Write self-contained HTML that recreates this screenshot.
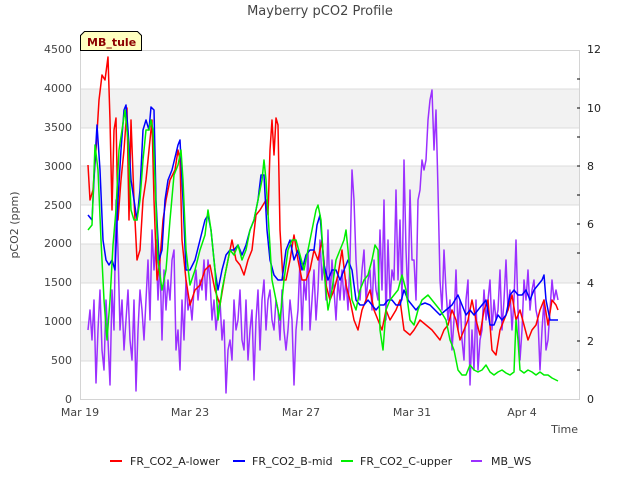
<!DOCTYPE html>
<html><head><meta charset="utf-8"><style>
html,body{margin:0;padding:0;background:#fff;width:640px;height:480px;overflow:hidden}
svg{display:block;font-family:"DejaVu Sans","Liberation Sans",sans-serif}
</style></head><body>
<svg width="640" height="480" viewBox="0 0 640 480">
<rect x="80" y="89" width="500" height="39" fill="#f2f2f2"/>
<rect x="80" y="166" width="500" height="39" fill="#f2f2f2"/>
<rect x="80" y="244" width="500" height="39" fill="#f2f2f2"/>
<rect x="80" y="322" width="500" height="39" fill="#f2f2f2"/>
<g stroke="#dcdcdc" stroke-width="1">
<line x1="80" y1="89" x2="580" y2="89"/><line x1="80" y1="128" x2="580" y2="128"/>
<line x1="80" y1="166" x2="580" y2="166"/><line x1="80" y1="205" x2="580" y2="205"/>
<line x1="80" y1="244" x2="580" y2="244"/><line x1="80" y1="283" x2="580" y2="283"/>
<line x1="80" y1="322" x2="580" y2="322"/><line x1="80" y1="361" x2="580" y2="361"/>
</g>
<rect x="80.5" y="50.5" width="499" height="349" fill="none" stroke="#d4d4d4"/>
<g fill="none" stroke-width="1.5" stroke-linejoin="round">
<polyline stroke="#9b30ff" points="88,330 90,310 92,340 94,300 96,383 98,330 100,290 102,350 104,370 106,300 108,340 110,385 112,290 114,330 116,200 118,250 120,330 122,300 124,350 126,320 128,290 130,340 132,360 134,300 136,391 138,330 140,290 142,310 144,340 146,300 148,260 150,320 152,230 154,270 156,240 158,300 160,260 162,340 164,270 166,310 168,280 170,300 172,260 174,250 176,350 178,330 180,370 182,300 184,340 186,280 188,310 190,300 192,320 194,290 196,270 198,300 200,280 202,290 204,260 206,300 208,260 210,280 212,320 214,300 216,330 218,310 220,300 222,340 224,320 226,393 228,350 230,340 232,360 234,300 236,330 238,320 240,290 242,340 244,350 246,300 248,360 250,330 252,310 254,380 256,320 258,290 260,350 262,300 264,280 266,330 268,300 270,290 272,320 274,330 276,300 278,310 280,340 282,290 284,330 286,350 288,330 290,300 292,320 294,385 296,330 298,310 300,260 302,330 304,280 306,300 308,250 310,330 312,300 314,270 316,320 318,290 320,240 322,280 324,260 326,300 328,230 330,300 332,260 334,290 336,320 338,280 340,300 342,270 344,300 346,280 348,310 350,260 352,170 354,200 356,260 358,290 360,300 362,270 364,250 366,300 368,280 370,270 372,310 374,260 376,290 378,300 380,230 382,290 384,200 386,320 388,240 390,300 392,270 394,280 396,190 398,280 400,220 402,300 404,160 406,250 408,300 410,190 412,260 414,260 416,300 418,200 420,190 422,160 424,170 426,160 428,120 430,100 432,90 434,150 436,110 438,190 440,280 442,310 444,250 446,290 448,320 450,300 452,350 454,320 456,270 458,330 460,300 462,340 464,360 466,300 468,280 470,385 472,330 474,370 476,300 478,370 480,340 482,330 484,290 486,320 488,300 490,280 492,330 494,300 496,320 498,310 500,270 502,330 504,300 506,260 508,310 510,290 512,330 514,300 516,240 518,310 520,360 522,330 524,280 526,300 528,270 530,310 532,290 534,280 536,310 538,320 540,370 542,330 544,300 546,350 548,340 550,310 552,280 554,300 556,290 558,300"/>
<polyline stroke="#ff0000" points="88,165 90,200 93,190 96,150 99,100 102,75 105,80 108,57 110,120 112,210 114,130 116,118 118,220 121,180 124,150 127,108 129,220 131,120 134,200 137,260 140,250 143,200 146,180 149,150 152,120 154,200 157,280 160,260 163,220 166,200 170,180 175,170 178,150 180,160 182,240 186,280 190,305 195,290 200,285 205,270 210,265 215,290 220,305 225,275 228,260 232,240 236,260 240,265 244,275 248,260 252,250 256,215 260,210 263,205 266,200 268,215 270,150 272,120 274,155 276,118 278,125 280,230 283,280 286,280 290,260 294,235 298,260 302,280 306,280 310,270 314,250 318,260 322,240 326,285 330,300 334,290 338,275 342,250 346,285 350,300 354,320 358,330 362,310 366,300 370,290 374,310 378,320 382,330 386,310 390,320 396,310 400,300 404,330 410,335 414,330 420,320 426,325 432,330 436,335 440,340 444,330 448,325 452,310 456,320 460,340 464,330 468,320 472,300 476,320 480,335 484,310 488,300 492,350 496,355 500,330 504,320 508,310 512,295 516,320 520,310 524,325 528,340 532,330 536,325 540,310 544,300 548,325 552,300 556,305 558,310"/>
<polyline stroke="#0000ff" points="88,215 92,220 95,160 97,125 100,170 103,240 106,260 109,265 112,260 115,270 118,200 121,150 124,110 126,105 128,130 131,180 134,200 137,220 140,190 143,130 146,120 149,130 151,107 154,110 156,200 159,260 162,250 165,200 168,180 172,170 178,145 180,140 183,200 186,270 190,270 195,260 200,240 205,220 208,215 211,230 215,270 218,290 222,270 226,255 230,250 234,250 238,245 242,255 246,245 250,230 254,220 258,200 261,175 264,175 267,230 270,260 274,275 278,280 282,280 286,250 290,240 294,260 298,250 302,270 306,255 310,250 314,250 317,225 320,215 324,265 328,280 332,270 336,270 340,280 344,270 348,260 352,270 356,300 360,305 364,305 368,300 372,305 376,310 380,305 384,305 388,300 392,300 396,305 400,305 404,290 408,300 412,305 416,310 420,305 425,303 430,305 435,310 440,315 446,310 452,305 458,295 462,305 466,315 470,310 474,315 478,310 482,305 486,300 490,325 494,325 498,315 502,320 506,315 510,295 514,290 518,295 522,295 526,290 530,300 534,290 538,285 542,280 544,275 546,300 550,320 554,320 558,320"/>
<polyline stroke="#00ee00" points="88,230 92,225 95,145 98,170 101,240 104,300 107,340 110,300 113,245 116,210 119,150 122,130 125,110 128,140 131,210 134,220 137,220 140,200 143,160 146,130 149,130 151,120 153,130 155,180 158,260 162,290 166,270 170,220 174,175 178,165 181,150 183,180 186,250 190,285 195,270 200,250 205,235 208,210 211,230 215,270 218,320 222,290 226,270 230,250 234,255 238,245 242,260 246,250 250,230 254,220 258,200 262,180 264,160 266,180 269,230 272,280 276,300 280,320 284,280 288,250 292,240 296,240 300,255 304,270 308,250 312,230 316,210 318,205 321,220 324,270 328,310 332,290 336,260 340,250 344,240 346,230 348,250 352,300 356,310 360,290 364,280 368,275 372,260 375,245 378,250 380,330 383,350 386,310 390,300 394,295 398,290 402,275 406,290 410,320 414,325 418,310 422,300 428,295 432,300 436,305 440,310 446,320 450,340 454,350 458,370 462,375 466,375 470,365 474,370 478,372 482,370 486,365 490,372 494,375 498,372 502,370 506,373 510,375 514,372 516,320 518,340 520,370 524,373 528,370 532,372 536,375 540,372 544,375 548,375 552,378 556,380 558,381"/>
</g>
<g font-size="11" fill="#444" text-anchor="end">
<text x="72" y="53">4500</text><text x="72" y="92">4000</text><text x="72" y="131">3500</text>
<text x="72" y="170">3000</text><text x="72" y="209">2500</text><text x="72" y="247">2000</text>
<text x="72" y="286">1500</text><text x="72" y="325">1000</text><text x="72" y="364">500</text><text x="72" y="403">0</text>
</g>
<g stroke="#000" stroke-width="1">
<line x1="577" y1="79" x2="580" y2="79"/><line x1="577" y1="108" x2="580" y2="108"/><line x1="577" y1="137" x2="580" y2="137"/>
<line x1="577" y1="166" x2="580" y2="166"/><line x1="577" y1="195" x2="580" y2="195"/><line x1="577" y1="224" x2="580" y2="224"/>
<line x1="577" y1="253" x2="580" y2="253"/><line x1="577" y1="283" x2="580" y2="283"/><line x1="577" y1="312" x2="580" y2="312"/>
<line x1="577" y1="341" x2="580" y2="341"/><line x1="577" y1="370" x2="580" y2="370"/>
</g>
<g font-size="11" fill="#222">
<text x="587" y="53">12</text><text x="587" y="112">10</text><text x="587" y="170">8</text>
<text x="587" y="228">6</text><text x="587" y="287">4</text><text x="587" y="345">2</text><text x="587" y="403">0</text>
</g>
<g font-size="11" fill="#444" text-anchor="middle">
<text x="80" y="416">Mar 19</text><text x="190" y="416">Mar 23</text><text x="301" y="416">Mar 27</text>
<text x="412" y="416">Mar 31</text><text x="522" y="416">Apr 4</text>
</g>
<text x="578" y="433" font-size="11" fill="#444" text-anchor="end">Time</text>
<text x="320" y="15" font-size="13" fill="#444" text-anchor="middle">Mayberry pCO2 Profile</text>
<text transform="translate(18,225) rotate(-90)" font-size="11" fill="#444" text-anchor="middle">pCO2 (ppm)</text>
<path d="M84.5,31.5 L137.5,31.5 L141.5,35.5 L141.5,50.5 L80.5,50.5 L80.5,35.5 Z" fill="#ffffc0" stroke="#000"/>
<text x="87" y="46" font-size="11" font-weight="bold" fill="#8b0000">MB_tule</text>
<g font-size="11" fill="#222">
<line x1="110" y1="461" x2="122" y2="461" stroke="#ff0000" stroke-width="2"/><text x="130" y="465">FR_CO2_A-lower</text>
<line x1="233" y1="461" x2="245" y2="461" stroke="#0000ff" stroke-width="2"/><text x="252" y="465">FR_CO2_B-mid</text>
<line x1="341" y1="461" x2="353" y2="461" stroke="#00ee00" stroke-width="2"/><text x="360" y="465">FR_CO2_C-upper</text>
<line x1="471" y1="461" x2="482" y2="461" stroke="#9b30ff" stroke-width="2"/><text x="491" y="465">MB_WS</text>
</g>
</svg>
</body></html>
